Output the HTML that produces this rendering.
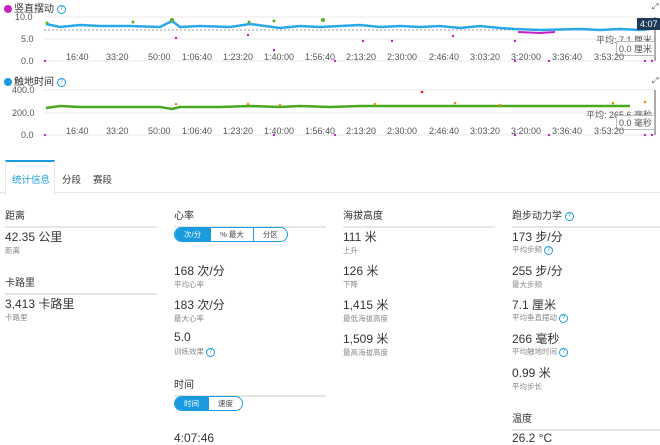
<!DOCTYPE html>
<html><head><meta charset="utf-8"><style>
body{margin:0;width:660px;height:443px;overflow:hidden;background:#fff;font-family:"Liberation Sans","Noto Sans CJK SC",sans-serif;color:#333;position:relative}
.a{position:absolute;white-space:nowrap}
.ax{font-size:9px;color:#555}
.hd{font-size:10px;color:#333;border-bottom:2px solid #e6e6e6;padding-bottom:4px}
.v{font-size:12px;color:#333}
.l{font-size:7.5px;color:#888}
.q{display:inline-block;width:7px;height:7px;border:1.2px solid #1a9be0;border-radius:50%;font-size:6px;line-height:7px;text-align:center;color:#1a9be0;vertical-align:middle}
.seg{display:flex;border:1.5px solid #1a9be0;border-radius:10px;height:13px;overflow:hidden;font-size:7.5px}
.seg div{padding:0 9px;line-height:13px;color:#444;border-left:1px solid #1a9be0}
.seg div.on{background:#1a9be0;color:#fff;border-left:none}
.dot{display:inline-block;width:8px;height:8px;border-radius:50%;vertical-align:middle;margin-right:2px}
</style></head><body>
<div class="a" style="left:4px;top:0;font-size:10px"><span class="dot" style="background:#c820c0"></span>竖直摆动 <span class="q">?</span></div>
<div class="a ax" style="left:15px;top:12px">10.0</div>
<div class="a ax" style="left:21px;top:34px">5.0</div>
<div class="a ax" style="left:21px;top:56px">0.0</div>
<svg class="a" style="left:0;top:0" width="660" height="145">
<g stroke="#e8e8e8" stroke-width="1"><line x1="44" y1="17" x2="655" y2="17"/><line x1="44" y1="39" x2="655" y2="39"/><line x1="44" y1="61" x2="655" y2="61"/>
<line x1="44" y1="90" x2="655" y2="90"/><line x1="44" y1="113" x2="655" y2="113"/><line x1="44" y1="135" x2="655" y2="135"/></g>
<line x1="44" y1="30" x2="650" y2="30" stroke="#999" stroke-dasharray="2,2"/>
<polyline fill="none" stroke="#29a8e8" stroke-width="2.5" points="46,24 60,27 80,25 100,26 130,26 160,27 172,21 180,27 200,26 230,27 250,24 280,28 300,26 320,27 340,26 360,25 380,27 400,26 420,27 440,26 460,28 480,26 500,28 515,29 540,30 580,29 600,30 620,29 640,30 650,29"/>
<polyline fill="none" stroke="#c820c0" stroke-width="2" points="518,32 540,33 555,32"/>
<g fill="#5bb020"><circle cx="47" cy="23" r="1.5"/><circle cx="133" cy="22" r="1.5"/><circle cx="172" cy="20" r="2"/><circle cx="249" cy="22" r="1.5"/><circle cx="274" cy="21" r="1.5"/><circle cx="323" cy="20" r="2"/></g>
<g fill="#c820c0"><circle cx="45" cy="61" r="1.2"/><circle cx="176" cy="38" r="1.2"/><circle cx="248" cy="35" r="1.2"/><circle cx="274" cy="50" r="1.2"/><circle cx="363" cy="41" r="1.2"/><circle cx="392" cy="41" r="1.2"/><circle cx="453" cy="36" r="1.2"/><circle cx="515" cy="41" r="1.2"/><circle cx="515" cy="61" r="1.2"/><circle cx="549" cy="61" r="1.2"/><circle cx="645" cy="61" r="1.2"/><circle cx="652" cy="61" r="1.2"/><circle cx="335" cy="61" r="1.2"/><circle cx="45" cy="135" r="1.2"/><circle cx="274" cy="135" r="1.2"/><circle cx="335" cy="135" r="1.2"/><circle cx="515" cy="135" r="1.2"/><circle cx="549" cy="135" r="1.2"/><circle cx="645" cy="135" r="1.2"/><circle cx="652" cy="135" r="1.2"/></g>
<polyline fill="none" stroke="#4aa820" stroke-width="2.5" points="46,108 60,106 80,107 100,107 130,107 160,107 172,109 180,107 220,107 250,106 280,107 300,106 330,107 360,106 400,106 440,106 480,106 520,106 560,106 600,106 630,106"/>
<g fill="#f08a10"><circle cx="176" cy="104" r="1.3"/><circle cx="248" cy="104" r="1.3"/><circle cx="280" cy="105" r="1.3"/><circle cx="375" cy="104" r="1.3"/><circle cx="455" cy="103" r="1.3"/><circle cx="500" cy="105" r="1.3"/><circle cx="613" cy="103" r="1.3"/><circle cx="645" cy="102" r="1.3"/></g>
<circle cx="422" cy="92" r="1.3" fill="#e02020"/>
<line x1="655" y1="17" x2="655" y2="61" stroke="#555"/>
<line x1="655" y1="90" x2="655" y2="135" stroke="#555"/>
</svg>
<div class="a" style="left:637px;top:18px;background:#1d3b57;color:#fff;font-size:9px;padding:1px 3px">4:07</div>
<div class="a ax" style="left:596px;top:33px">平均: 7.1 厘米</div>
<div class="a ax" style="left:616px;top:41px;background:#fff;border:1px solid #bbb;padding:0 2px">0.0 厘米</div>
<div class="a ax" style="left:586px;top:108px">平均: 265.6 毫秒</div>
<div class="a ax" style="left:616px;top:115px;background:#fff;border:1px solid #bbb;padding:0 2px">0.0 毫秒</div>
<div class="a" style="left:652px;top:2px;font-size:8px">⤢</div>
<div class="a" style="left:652px;top:76px;font-size:8px">⤢</div>
<div class="a ax" style="left:66px;top:52px">16:40</div>
<div class="a ax" style="left:106px;top:52px">33:20</div><div class="a ax" style="left:148px;top:52px">50:00</div><div class="a ax" style="left:182px;top:52px">1:06:40</div><div class="a ax" style="left:223px;top:52px">1:23:20</div><div class="a ax" style="left:264px;top:52px">1:40:00</div><div class="a ax" style="left:305px;top:52px">1:56:40</div><div class="a ax" style="left:346px;top:52px">2:13:20</div><div class="a ax" style="left:387px;top:52px">2:30:00</div><div class="a ax" style="left:429px;top:52px">2:46:40</div><div class="a ax" style="left:470px;top:52px">3:03:20</div><div class="a ax" style="left:511px;top:52px">3:20:00</div><div class="a ax" style="left:552px;top:52px">3:36:40</div><div class="a ax" style="left:594px;top:52px">3:53:20</div>
<div class="a" style="left:4px;top:73px;font-size:10px"><span class="dot" style="background:#1a9be0"></span>触地时间 <span class="q">?</span></div>
<div class="a ax" style="left:12px;top:85px">400.0</div>
<div class="a ax" style="left:12px;top:108px">200.0</div>
<div class="a ax" style="left:21px;top:130px">0.0</div>
<div class="a ax" style="left:66px;top:126px">16:40</div>
<div class="a ax" style="left:106px;top:126px">33:20</div><div class="a ax" style="left:148px;top:126px">50:00</div><div class="a ax" style="left:182px;top:126px">1:06:40</div><div class="a ax" style="left:223px;top:126px">1:23:20</div><div class="a ax" style="left:264px;top:126px">1:40:00</div><div class="a ax" style="left:305px;top:126px">1:56:40</div><div class="a ax" style="left:346px;top:126px">2:13:20</div><div class="a ax" style="left:387px;top:126px">2:30:00</div><div class="a ax" style="left:429px;top:126px">2:46:40</div><div class="a ax" style="left:470px;top:126px">3:03:20</div><div class="a ax" style="left:511px;top:126px">3:20:00</div><div class="a ax" style="left:552px;top:126px">3:36:40</div><div class="a ax" style="left:594px;top:126px">3:53:20</div>
<div class="a" style="left:0;top:192px;width:660px;border-top:1px solid #e6e6e6"></div>
<div class="a" style="left:5px;top:160px;width:48px;height:33px;border-top:2px solid #1a9be0;border-left:1px solid #e6e6e6;border-right:1px solid #e6e6e6;background:#fff"></div>
<div class="a" style="left:12px;top:172px;font-size:9.5px;color:#1a9be0">统计信息</div>
<div class="a" style="left:62px;top:172px;font-size:9.5px">分段</div>
<div class="a" style="left:93px;top:172px;font-size:9.5px">赛段</div>
<div class="a hd" style="left:5px;top:207px;width:152px">距离</div>
<div class="a v" style="left:5px;top:228px">42.35 公里</div><div class="a l" style="left:5px;top:245px">距离</div>
<div class="a hd" style="left:5px;top:274px;width:152px">卡路里</div>
<div class="a v" style="left:5px;top:295px">3,413 卡路里</div><div class="a l" style="left:5px;top:312px">卡路里</div>
<div class="a hd" style="left:174px;top:207px;width:152px">心率</div>
<div class="a seg" style="left:174px;top:227px"><div class="on">次/分</div><div>% 最大</div><div>分区</div></div>
<div class="a v" style="left:174px;top:262px">168 次/分</div><div class="a l" style="left:174px;top:279px">平均心率</div>
<div class="a v" style="left:174px;top:296px">183 次/分</div><div class="a l" style="left:174px;top:313px">最大心率</div>
<div class="a v" style="left:174px;top:330px">5.0</div><div class="a l" style="left:174px;top:346px">训练效果 <span class="q">?</span></div>
<div class="a hd" style="left:174px;top:376px;width:152px">时间</div>
<div class="a seg" style="left:174px;top:396px"><div class="on">时间</div><div>速度</div></div>
<div class="a v" style="left:174px;top:431px">4:07:46</div>
<div class="a hd" style="left:343px;top:207px;width:152px">海拔高度</div>
<div class="a v" style="left:343px;top:228px">111 米</div><div class="a l" style="left:343px;top:245px">上升</div>
<div class="a v" style="left:343px;top:262px">126 米</div><div class="a l" style="left:343px;top:279px">下降</div>
<div class="a v" style="left:343px;top:296px">1,415 米</div><div class="a l" style="left:343px;top:313px">最低海拔高度</div>
<div class="a v" style="left:343px;top:330px">1,509 米</div><div class="a l" style="left:343px;top:347px">最高海拔高度</div>
<div class="a hd" style="left:512px;top:207px;width:148px">跑步动力学 <span class="q">?</span></div>
<div class="a v" style="left:512px;top:228px">173 步/分</div><div class="a l" style="left:512px;top:244px">平均步频 <span class="q">?</span></div>
<div class="a v" style="left:512px;top:262px">255 步/分</div><div class="a l" style="left:512px;top:279px">最大步频</div>
<div class="a v" style="left:512px;top:296px">7.1 厘米</div><div class="a l" style="left:512px;top:312px">平均垂直摆动 <span class="q">?</span></div>
<div class="a v" style="left:512px;top:330px">266 毫秒</div><div class="a l" style="left:512px;top:346px">平均触地时间 <span class="q">?</span></div>
<div class="a v" style="left:512px;top:364px">0.99 米</div><div class="a l" style="left:512px;top:381px">平均步长</div>
<div class="a hd" style="left:512px;top:410px;width:148px">温度</div>
<div class="a v" style="left:512px;top:431px">26.2 °C</div>
</body></html>
